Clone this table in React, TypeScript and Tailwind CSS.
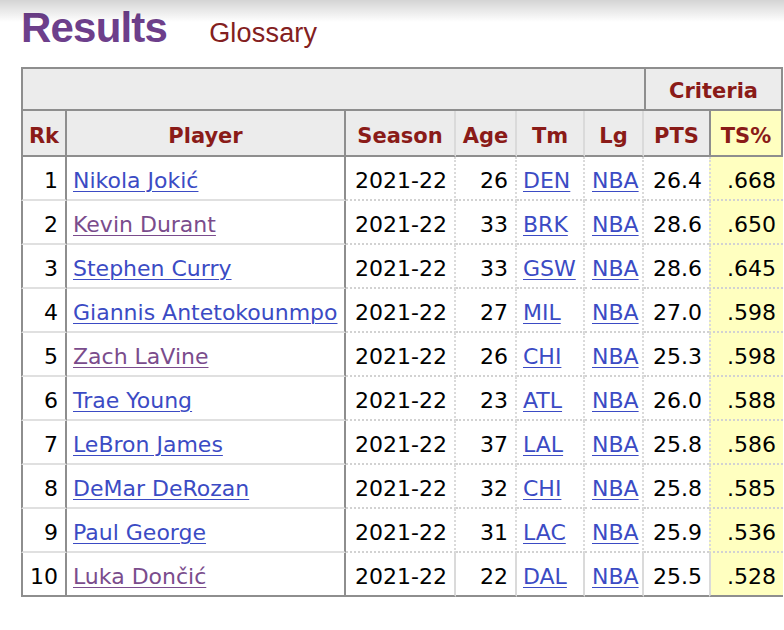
import React from "react";

type Row = {
  rk: number;
  name: string;
  visited: boolean;
  age: number;
  tm: string;
  pts: string;
  ts: string;
};

const rows: Row[] = [
  { rk: 1, name: "Nikola Jokić", visited: false, age: 26, tm: "DEN", pts: "26.4", ts: ".668" },
  { rk: 2, name: "Kevin Durant", visited: true, age: 33, tm: "BRK", pts: "28.6", ts: ".650" },
  { rk: 3, name: "Stephen Curry", visited: false, age: 33, tm: "GSW", pts: "28.6", ts: ".645" },
  { rk: 4, name: "Giannis Antetokounmpo", visited: false, age: 27, tm: "MIL", pts: "27.0", ts: ".598" },
  { rk: 5, name: "Zach LaVine", visited: true, age: 26, tm: "CHI", pts: "25.3", ts: ".598" },
  { rk: 6, name: "Trae Young", visited: false, age: 23, tm: "ATL", pts: "26.0", ts: ".588" },
  { rk: 7, name: "LeBron James", visited: false, age: 37, tm: "LAL", pts: "25.8", ts: ".586" },
  { rk: 8, name: "DeMar DeRozan", visited: false, age: 32, tm: "CHI", pts: "25.8", ts: ".585" },
  { rk: 9, name: "Paul George", visited: false, age: 31, tm: "LAC", pts: "25.9", ts: ".536" },
  { rk: 10, name: "Luka Dončić", visited: true, age: 22, tm: "DAL", pts: "25.5", ts: ".528" },
];

export default function App() {
  return (
    <div className="relative w-[784px] h-[630px] bg-white overflow-hidden">
      <div className="pointer-events-none absolute left-0 top-0 w-full h-[22px] bg-gradient-to-b from-[rgba(0,0,0,0.17)] to-[rgba(0,0,0,0)]" />
      <div
        className="flex items-baseline pl-[21px] pt-[4px] h-[67px]"
        style={{ fontFamily: '"Liberation Sans", Arial, sans-serif' }}
      >
        <span className="text-[42px] font-bold tracking-[-0.8px] text-[#6d3f8b] leading-[48px]">Results</span>
        <span className="ml-[42px] text-[27px] tracking-[0.2px] text-[#832020] leading-[48px]">Glossary</span>
      </div>
      <table
        className="ml-[21px] table-fixed border-separate border-spacing-0 w-[762px]"
        style={{ fontFamily: '"DejaVu Sans", Verdana, sans-serif' }}
      >
        <colgroup>
          <col className="w-[46px]" />
          <col className="w-[279px]" />
          <col className="w-[110px]" />
          <col className="w-[61px]" />
          <col className="w-[68px]" />
          <col className="w-[59px]" />
          <col className="w-[65px]" />
          <col className="w-[74px]" />
        </colgroup>
        <thead className="text-[21px] font-bold text-[#8a1b18]">
          <tr className="h-[44px]">
            <th colSpan={6} className="bg-[#ececec] border-l-2 border-t-2 border-b-2 border-[#8e8e8e]" />
            <th
              colSpan={2}
              className="bg-[#ececec] border-2 border-[#8e8e8e] text-center align-middle pt-[5px]"
            >
              Criteria
            </th>
          </tr>
          <tr className="h-[46px] [&>th]:pt-[8px]">
            <th className="bg-[#ececec] border-l-2 border-r-2 border-b-2 border-[#8e8e8e] text-center">Rk</th>
            <th className="bg-[#ececec] border-r-2 border-b-2 border-[#8e8e8e] text-center">Player</th>
            <th className="bg-[#ececec] border-b-2 border-b-[#8e8e8e] border-r-2 border-r-[#dadada] text-center">Season</th>
            <th className="bg-[#ececec] border-b-2 border-b-[#8e8e8e] border-r-2 border-r-[#dadada] text-center">Age</th>
            <th className="bg-[#ececec] border-b-2 border-b-[#8e8e8e] border-r-2 border-r-[#dadada] text-center">Tm</th>
            <th className="bg-[#ececec] border-b-2 border-b-[#8e8e8e] border-r-2 border-r-[#dadada] text-center">Lg</th>
            <th className="bg-[#ececec] border-b-2 border-b-[#8e8e8e] text-center">PTS</th>
            <th className="bg-[#ffffc0] border-l-2 border-r-2 border-b-2 border-[#8e8e8e] text-center">TS%</th>
          </tr>
        </thead>
        <tbody className="text-[22px] text-black">
          {rows.map((r, i) => {
            const last = i === rows.length - 1;
            const solidB = last ? "border-b-2 border-b-[#8e8e8e]" : "border-b-2 border-b-[#e0e0e0]";
            const dotB = last
              ? "border-b-2 border-b-[#8e8e8e]"
              : "border-b-2 border-dotted border-b-[#d2d2d2]";
            const nameColor = r.visited ? "text-[#7a4c8c]" : "text-[#3b4bc4]";
            return (
              <tr key={r.rk} className="h-[44px] [&>td]:pt-[5px] [&>td]:leading-[30px]">
                <td className={`border-l-2 border-l-[#8e8e8e] border-r-2 border-r-[#8e8e8e] ${solidB} text-right pr-[7px]`}>
                  {r.rk}
                </td>
                <td className={`border-r-2 border-r-[#8e8e8e] ${solidB} pl-[6px] whitespace-nowrap`}>
                  <span className={`${nameColor} underline underline-offset-[3px] decoration-1`}>{r.name}</span>
                </td>
                <td className={`border-r-2 border-r-[#dadada] ${dotB} pl-[9px] whitespace-nowrap`}>2021-22</td>
                <td className={`border-r-2 border-r-[#dadada] ${dotB} text-right pr-[7px]`}>{r.age}</td>
                <td className={`border-r-2 border-r-[#dadada] ${dotB} pl-[6px]`}>
                  <span className="text-[#3b4bc4] underline underline-offset-[3px] decoration-1">{r.tm}</span>
                </td>
                <td className={`border-r-2 border-r-[#dadada] ${dotB} pl-[7px]`}>
                  <span className="text-[#3b4bc4] underline underline-offset-[3px] decoration-1">NBA</span>
                </td>
                <td className={`${dotB} pl-[9px] whitespace-nowrap`}>{r.pts}</td>
                <td className={`bg-[#ffffc0] border-l-2 border-l-[#dadada] ${dotB} text-right pr-[7px]`}>{r.ts}</td>
              </tr>
            );
          })}
        </tbody>
      </table>
    </div>
  );
}
